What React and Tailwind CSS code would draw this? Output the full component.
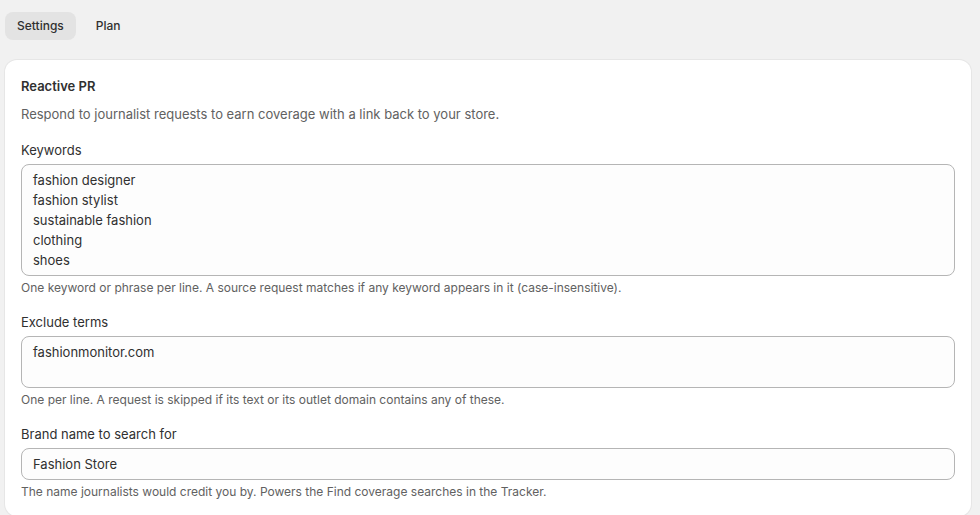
import { useState } from "react";

function Field({ label, help, children }) {
  return (
    <div className="flex flex-col">
      <label className="mb-1 text-[13px] leading-5 text-[#303030]">{label}</label>
      {children}
      <p className="mt-1 text-[12px] leading-4 text-[#616161]">{help}</p>
    </div>
  );
}

export default function App() {
  const [tab, setTab] = useState("settings");
  const [keywords, setKeywords] = useState(
    "fashion designer\nfashion stylist\nsustainable fashion\nclothing\nshoes"
  );
  const [exclude, setExclude] = useState("fashionmonitor.com");
  const [brand, setBrand] = useState("Fashion Store");

  const inputCls =
    "w-full rounded-lg border border-[#b5b5b5] bg-[#fdfdfd] px-[11px] py-[5px] text-[13px] leading-5 text-[#303030] outline-none resize-none";

  return (
    <div
      className="min-h-screen bg-[#f1f1f1] px-[5px] pt-3 text-[#303030]"
      style={{ fontFamily: "Inter, 'Noto Sans', sans-serif" }}
    >
      <div className="flex items-center gap-2">
        <button
          onClick={() => setTab("settings")}
          className={`h-7 rounded-lg px-3 text-[12px] font-medium ${
            tab === "settings" ? "bg-[#e3e3e3]" : ""
          }`}
        >
          Settings
        </button>
        <button
          onClick={() => setTab("plan")}
          className={`h-7 rounded-lg px-3 text-[12px] font-medium ${
            tab === "plan" ? "bg-[#e3e3e3]" : ""
          }`}
        >
          Plan
        </button>
      </div>

      <div className="mt-5 mr-1 rounded-xl bg-white p-4 shadow-[0_0_0_1px_#e6e6e6]">
        <h2 className="text-[13px] font-semibold leading-5">Reactive PR</h2>
        <p className="mt-2 text-[13px] leading-5 text-[#616161]">
          Respond to journalist requests to earn coverage with a link back to your store.
        </p>

        <div className="mt-4 flex flex-col gap-4">
          <Field
            label="Keywords"
            help="One keyword or phrase per line. A source request matches if any keyword appears in it (case-insensitive)."
          >
            <textarea
              rows={5}
              value={keywords}
              onChange={(e) => setKeywords(e.target.value)}
              className={inputCls}
            />
          </Field>
          <Field
            label="Exclude terms"
            help="One per line. A request is skipped if its text or its outlet domain contains any of these."
          >
            <textarea
              rows={2}
              value={exclude}
              onChange={(e) => setExclude(e.target.value)}
              className={inputCls}
            />
          </Field>
          <Field
            label="Brand name to search for"
            help="The name journalists would credit you by. Powers the Find coverage searches in the Tracker."
          >
            <input
              value={brand}
              onChange={(e) => setBrand(e.target.value)}
              className={inputCls}
            />
          </Field>
        </div>
      </div>
    </div>
  );
}
